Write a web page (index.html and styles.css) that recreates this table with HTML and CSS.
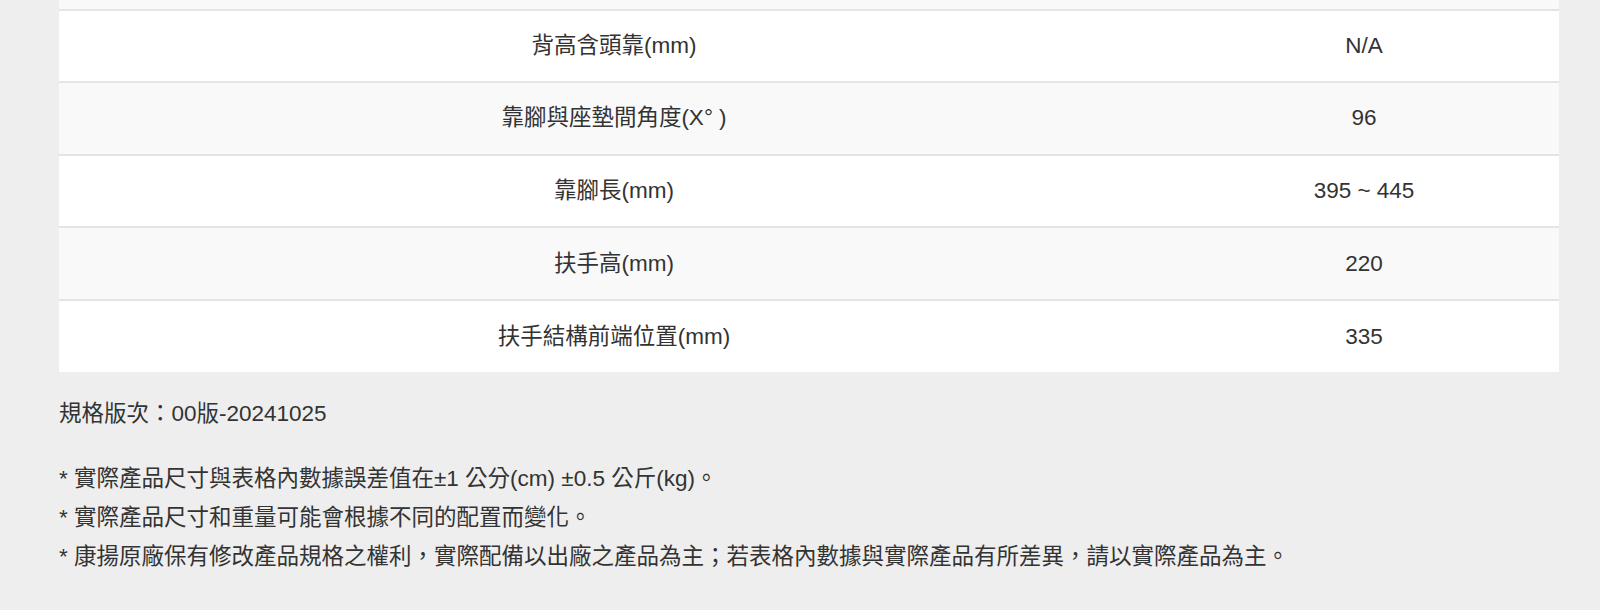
FILE: index.html
```html
<!DOCTYPE html>
<html lang="zh-Hant">
<head>
<meta charset="utf-8">
<title>規格表</title>
<link rel="stylesheet" href="styles.css">
</head>
<body>
<main class="page">
  <table class="spec">
    <tbody>
      <tr class="row row-partial"><td class="cell-name"></td><td class="cell-value"></td></tr>
      <tr class="row"><td class="cell-name">背高含頭靠(mm)</td><td class="cell-value">N/A</td></tr>
      <tr class="row"><td class="cell-name">靠腳與座墊間角度(X° )</td><td class="cell-value">96</td></tr>
      <tr class="row"><td class="cell-name">靠腳長(mm)</td><td class="cell-value">395 ~ 445</td></tr>
      <tr class="row"><td class="cell-name">扶手高(mm)</td><td class="cell-value">220</td></tr>
      <tr class="row"><td class="cell-name">扶手結構前端位置(mm)</td><td class="cell-value">335</td></tr>
    </tbody>
  </table>
  <p class="version">規格版次：00版-20241025</p>
  <ul class="notes">
    <li>* 實際產品尺寸與表格內數據誤差值在±1 公分(cm) ±0.5 公斤(kg)。</li>
    <li>* 實際產品尺寸和重量可能會根據不同的配置而變化。</li>
    <li>* 康揚原廠保有修改產品規格之權利，實際配備以出廠之產品為主；若表格內數據與實際產品有所差異，請以實際產品為主。</li>
  </ul>
</main>
</body>
</html>
```

FILE: styles.css
```css
html, body {
  margin: 0;
  padding: 0;
  background: #eeeeee;
}

body {
  font-family: "Liberation Sans", "Noto Sans CJK TC", sans-serif;
  font-size: 22.5px;
  color: #333333;
}

.page {
  width: 1500px;
  margin-left: 59px;
}

.spec {
  width: 100%;
  border-collapse: collapse;
  table-layout: fixed;
  background: #ffffff;
}

.row {
  height: 72.6px;
}

.row td {
  border-top: 2px solid #e4e4e4;
  padding: 0;
  text-align: center;
  vertical-align: middle;
  line-height: 26px;
}

.row:nth-child(odd) {
  background: #f9f9f9;
}

.row:nth-child(even) {
  background: #ffffff;
}

.row-partial {
  height: 9.5px;
}

.row-partial td {
  border-top: none;
  line-height: 0;
}

.cell-name {
  width: 74%;
}

.cell-value {
  width: 26%;
}

.version {
  margin: 24px 0 0;
  line-height: 36px;
}

.notes {
  list-style: none;
  margin: 28px 0 0;
  padding: 0;
}

.notes li {
  line-height: 38.6px;
}
```
